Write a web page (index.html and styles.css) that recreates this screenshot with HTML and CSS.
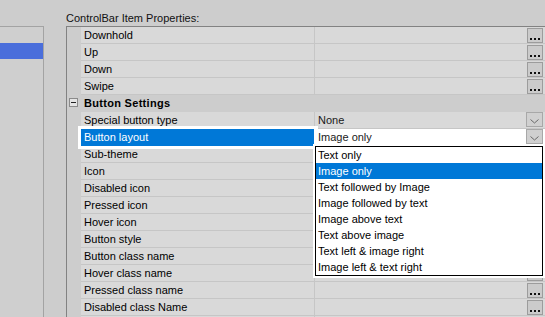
FILE: index.html
```html
<!DOCTYPE html>
<html>
<head>
<meta charset="utf-8">
<link rel="stylesheet" href="styles.css">
</head>
<body>
<div class="app">
  <aside class="left">
    <div class="left-sel"></div>
  </aside>
  <main class="props">
    <div class="title">ControlBar Item Properties:</div>
    <div class="grid">
      <div class="row"><div class="gut"></div><div class="name">Downhold</div><div class="val"><span class="txt"></span><span class="btn ell"><svg width="14" height="13"><rect x="2" y="9" width="2" height="2"/><rect x="6" y="9" width="2" height="2"/><rect x="10" y="9" width="2" height="2"/></svg></span></div></div>
      <div class="row"><div class="gut"></div><div class="name">Up</div><div class="val"><span class="txt"></span><span class="btn ell"><svg width="14" height="13"><rect x="2" y="9" width="2" height="2"/><rect x="6" y="9" width="2" height="2"/><rect x="10" y="9" width="2" height="2"/></svg></span></div></div>
      <div class="row"><div class="gut"></div><div class="name">Down</div><div class="val"><span class="txt"></span><span class="btn ell"><svg width="14" height="13"><rect x="2" y="9" width="2" height="2"/><rect x="6" y="9" width="2" height="2"/><rect x="10" y="9" width="2" height="2"/></svg></span></div></div>
      <div class="row"><div class="gut"></div><div class="name">Swipe</div><div class="val"><span class="txt"></span><span class="btn ell"><svg width="14" height="13"><rect x="2" y="9" width="2" height="2"/><rect x="6" y="9" width="2" height="2"/><rect x="10" y="9" width="2" height="2"/></svg></span></div></div>
      <div class="row cat"><div class="gut"><span class="minus"><svg width="7" height="7"><rect x="1" y="3" width="5" height="1"/></svg></span></div><div class="name">Button Settings</div><div class="val"></div></div>
      <div class="row"><div class="gut"></div><div class="name">Special button type</div><div class="val"><span class="txt">None</span><span class="btn dd"><svg width="15" height="13"><polyline points="3.5,6.5 7.5,10 11.5,6.5"/></svg></span></div></div>
      <div class="row sel"><div class="gut"></div><div class="name">Button layout</div><div class="val"><span class="txt">Image only</span><span class="btn dd"><svg width="15" height="13"><polyline points="3.5,6.5 7.5,10 11.5,6.5"/></svg></span></div></div>
      <div class="row"><div class="gut"></div><div class="name">Sub-theme</div><div class="val"><span class="txt"></span><span class="btn ell"><svg width="14" height="13"><rect x="2" y="9" width="2" height="2"/><rect x="6" y="9" width="2" height="2"/><rect x="10" y="9" width="2" height="2"/></svg></span></div></div>
      <div class="row"><div class="gut"></div><div class="name">Icon</div><div class="val"><span class="txt"></span><span class="btn ell"><svg width="14" height="13"><rect x="2" y="9" width="2" height="2"/><rect x="6" y="9" width="2" height="2"/><rect x="10" y="9" width="2" height="2"/></svg></span></div></div>
      <div class="row"><div class="gut"></div><div class="name">Disabled icon</div><div class="val"><span class="txt"></span><span class="btn ell"><svg width="14" height="13"><rect x="2" y="9" width="2" height="2"/><rect x="6" y="9" width="2" height="2"/><rect x="10" y="9" width="2" height="2"/></svg></span></div></div>
      <div class="row"><div class="gut"></div><div class="name">Pressed icon</div><div class="val"><span class="txt"></span><span class="btn ell"><svg width="14" height="13"><rect x="2" y="9" width="2" height="2"/><rect x="6" y="9" width="2" height="2"/><rect x="10" y="9" width="2" height="2"/></svg></span></div></div>
      <div class="row"><div class="gut"></div><div class="name">Hover icon</div><div class="val"><span class="txt"></span><span class="btn ell"><svg width="14" height="13"><rect x="2" y="9" width="2" height="2"/><rect x="6" y="9" width="2" height="2"/><rect x="10" y="9" width="2" height="2"/></svg></span></div></div>
      <div class="row"><div class="gut"></div><div class="name">Button style</div><div class="val"><span class="txt"></span><span class="btn ell"><svg width="14" height="13"><rect x="2" y="9" width="2" height="2"/><rect x="6" y="9" width="2" height="2"/><rect x="10" y="9" width="2" height="2"/></svg></span></div></div>
      <div class="row"><div class="gut"></div><div class="name">Button class name</div><div class="val"><span class="txt"></span><span class="btn ell"><svg width="14" height="13"><rect x="2" y="9" width="2" height="2"/><rect x="6" y="9" width="2" height="2"/><rect x="10" y="9" width="2" height="2"/></svg></span></div></div>
      <div class="row"><div class="gut"></div><div class="name">Hover class name</div><div class="val"><span class="txt"></span><span class="btn ell"><svg width="14" height="13"><rect x="2" y="9" width="2" height="2"/><rect x="6" y="9" width="2" height="2"/><rect x="10" y="9" width="2" height="2"/></svg></span></div></div>
      <div class="row"><div class="gut"></div><div class="name">Pressed class name</div><div class="val"><span class="txt"></span><span class="btn ell"><svg width="14" height="13"><rect x="2" y="9" width="2" height="2"/><rect x="6" y="9" width="2" height="2"/><rect x="10" y="9" width="2" height="2"/></svg></span></div></div>
      <div class="row"><div class="gut"></div><div class="name">Disabled class Name</div><div class="val"><span class="txt"></span><span class="btn ell"><svg width="14" height="13"><rect x="2" y="9" width="2" height="2"/><rect x="6" y="9" width="2" height="2"/><rect x="10" y="9" width="2" height="2"/></svg></span></div></div>
      <div class="row last"><div class="gut"></div><div class="name"></div><div class="val"></div></div>

      <ul class="dropdown">
        <li>Text only</li>
        <li class="on">Image only</li>
        <li>Text followed by Image</li>
        <li>Image followed by text</li>
        <li>Image above text</li>
        <li>Text above image</li>
        <li>Text left &amp; image right</li>
        <li>Image left &amp; text right</li>
      </ul>
    </div>
  </main>
</div>
</body>
</html>
```

FILE: styles.css
```css
html, body {
  margin: 0;
  padding: 0;
  height: 317px;
  overflow: hidden;
  background: #cdcdcd;
  font-family: "Liberation Sans", Arial, sans-serif;
  font-size: 11px;
  color: #000;
}

.app {
  display: flex;
  height: 317px;
  overflow: hidden;
}

.left {
  width: 43px;
  margin-top: 26px;
  padding-top: 16px;
  border-top: 1px solid #a3a3a3;
  border-right: 1px solid #a3a3a3;
  background: #cfcfcf;
  flex: none;
}

.left-sel {
  height: 16px;
  background: #4a6edb;
}

.props {
  margin-left: 22px;
  flex: 1;
  min-width: 0;
  overflow: hidden;
}

.title {
  height: 26px;
  box-sizing: border-box;
  padding-top: 12px;
  line-height: 13px;
  white-space: nowrap;
  color: #111;
}

.grid {
  position: relative;
  border-top: 1px solid #828282;
  border-left: 1px solid #828282;
}

.row {
  display: grid;
  grid-template-columns: 14px 234px 1fr;
  height: 17px;
  line-height: 16px;
}

.row.last {
  height: 2px;
  overflow: hidden;
}

.gut {
  background: #cdcdcd;
}

.name {
  background: #d9d9d9;
  border-bottom: 1px solid #c6c6c6;
  border-right: 1px solid #c6c6c6;
  padding-left: 3px;
  white-space: nowrap;
  overflow: hidden;
}

.val {
  background: #d9d9d9;
  border-bottom: 1px solid #c6c6c6;
  display: flex;
  justify-content: space-between;
  align-items: flex-start;
  padding-left: 3px;
  padding-right: 2px;
  white-space: nowrap;
}

.txt {
  color: #1a1a1a;
}

.btn {
  box-sizing: border-box;
  margin-top: 1px;
  height: 15px;
  border: 1px solid #9c9c9c;
  background: #cbcbcb;
  display: flex;
}

.ell {
  width: 16px;
}

.ell svg rect {
  fill: #111;
}

.dd {
  width: 17px;
  margin-top: 0;
  border-color: #a8a8a8;
  background: #d0d0d0;
}

.dd svg polyline {
  fill: none;
  stroke: #6a6a6a;
  stroke-width: 1;
}

.cat .name,
.cat .val {
  background: #cdcdcd;
  border-color: #cdcdcd;
  font-weight: bold;
}

.cat .name {
  letter-spacing: 0.3px;
}

.cat .gut {
  padding-left: 2px;
  padding-top: 3px;
}

.minus {
  display: block;
  box-sizing: border-box;
  width: 9px;
  height: 9px;
  border: 1px solid #8a8a8a;
  background: #e4e4e4;
}

.minus svg {
  display: block;
}

.minus svg rect {
  fill: #222;
}

.sel .name {
  position: relative;
  z-index: 1;
  background: #0078d7;
  color: #fff;
  border-right-color: #fff;
  border-bottom-color: #0078d7;
  box-shadow: 0 0 0 3px #fff;
}

.sel .val {
  background: #fff;
  border-bottom-color: #fff;
}

.dropdown {
  position: absolute;
  z-index: 2;
  left: 248px;
  top: 119px;
  width: 228px;
  box-sizing: border-box;
  margin: 0;
  padding: 0;
  list-style: none;
  background: #fff;
  border: 1px solid #000;
  box-shadow: 0 0 0 2px #fff;
}

.dropdown li {
  height: 16px;
  line-height: 16px;
  padding-left: 2px;
  color: #000;
  white-space: nowrap;
}

.dropdown li.on {
  background: #0078d7;
  color: #fff;
}
```
